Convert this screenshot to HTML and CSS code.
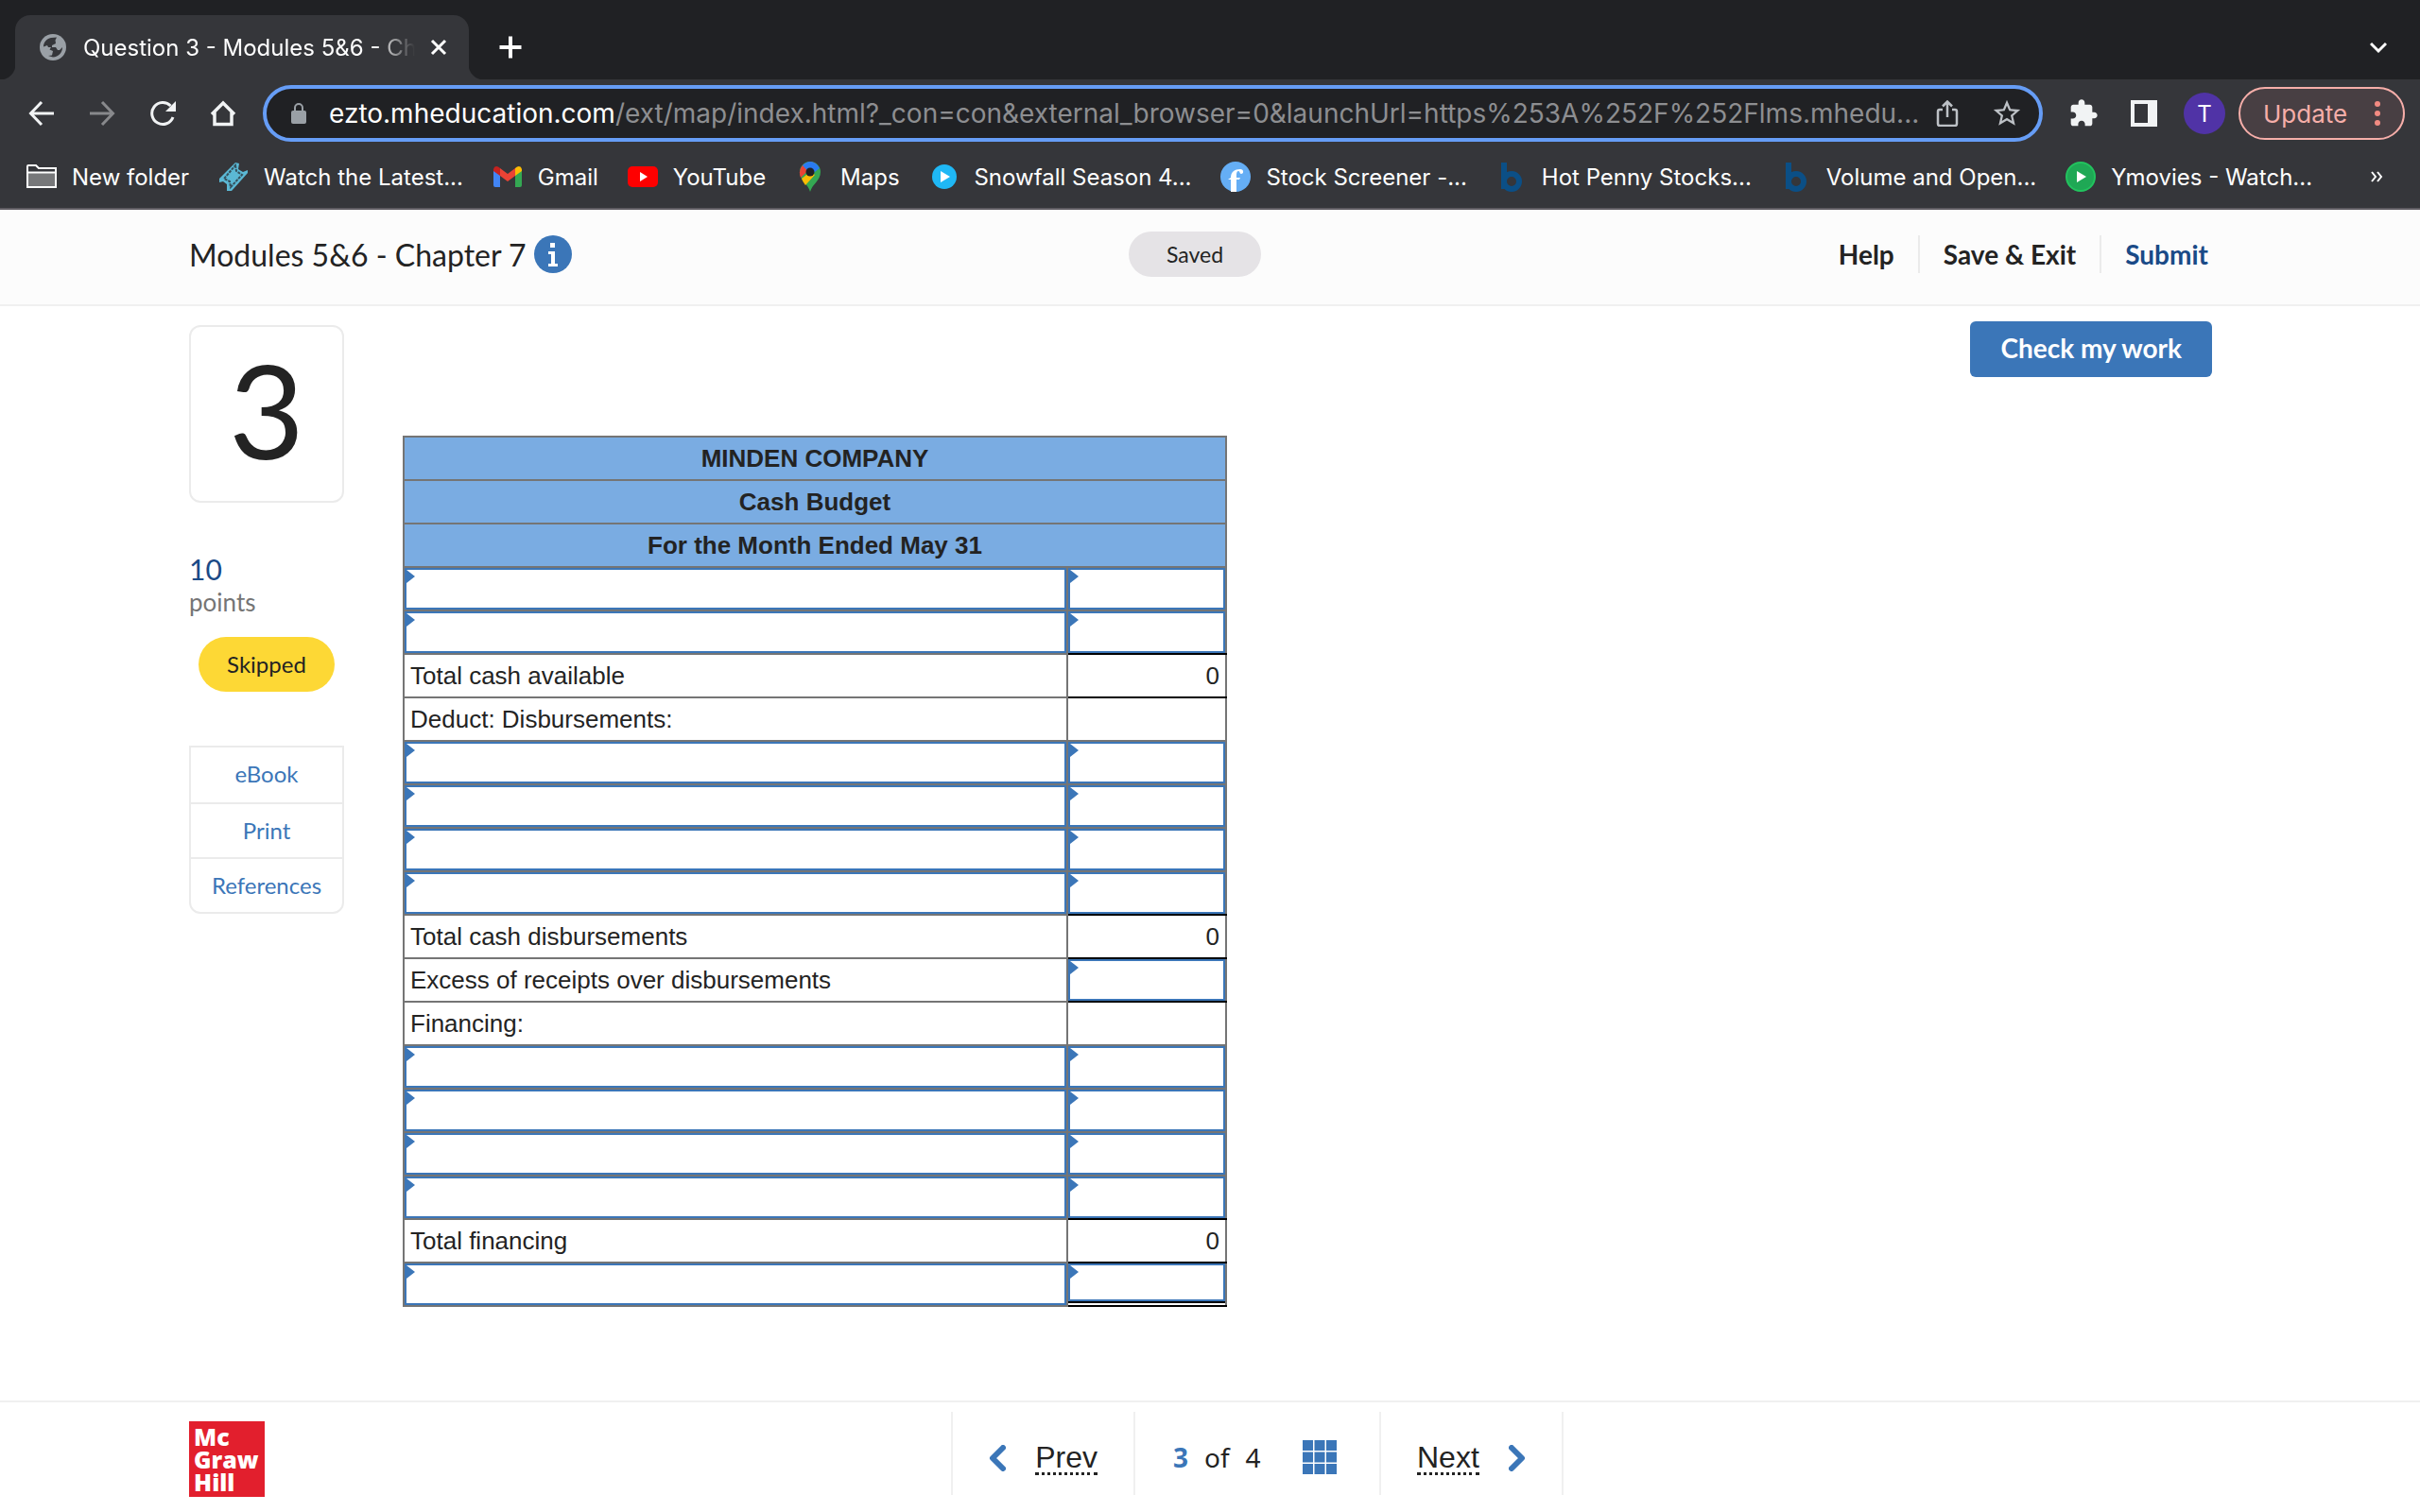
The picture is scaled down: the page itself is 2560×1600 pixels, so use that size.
FILE: index.html
```html
<!DOCTYPE html>
<html lang="en">
<head>
  <meta charset="UTF-8" />
  <meta name="viewport" content="width=device-width, initial-scale=1" />
  <title>Question 3 - Modules 5&amp;6 - Chapter 7</title>
  <link rel="stylesheet" href="styles.css">
</head>
<body>

  <div class="browser">
    <div class="tab-strip">
      <div class="tab">
        <svg class="icon-28" viewBox="0 0 28 28"><circle cx="14" cy="14" r="14" fill="#9aa0a6"/><path d="M12 4 L18 3.5 L16.5 6.5 L17 10 L13 12 L13 14 L9 14 L8 12 L4 13.5 C4 9 7 5 12 4 Z M24 14 C24 20 20 24 14 24.5 L9 23 L13 22.5 L14 18 L10.5 16.5 L12 14 L17 14 L19 17 L21 17 Z" fill="#35363a"/></svg>
        <span class="tab-title">Question 3 - Modules 5&amp;6 - Chapter 7</span>
        <button class="icon-btn" aria-label="Close tab"><svg class="icon-18" viewBox="0 0 18 18"><path d="M2 2 L16 16 M16 2 L2 16" stroke="#fff" stroke-width="3" fill="none"/></svg></button>
      </div>
      <button class="icon-btn new-tab" aria-label="New tab"><svg class="icon-24" viewBox="0 0 24 24"><path d="M12 0.5 V23.5 M0.5 12 H23.5" stroke="#fff" stroke-width="4" fill="none"/></svg></button>
      <button class="icon-btn tab-search" aria-label="Search tabs"><svg class="icon-18" viewBox="0 0 18 18"><path d="M1 5 L9 13 L17 5" stroke="#fff" stroke-width="3" fill="none"/></svg></button>
    </div>

    <div class="toolbar">
      <div class="nav-buttons">
        <button class="icon-btn" aria-label="Back"><svg class="icon-28" viewBox="0 0 28 28"><path d="M27 14 H3 M14 2 L2.5 14 L14 26" stroke="#f1f3f4" stroke-width="3" fill="none"/></svg></button>
        <button class="icon-btn" aria-label="Forward"><svg class="icon-28" viewBox="0 0 28 28"><path d="M1 14 H25 M14 2 L25.5 14 L14 26" stroke="#88898c" stroke-width="3" fill="none"/></svg></button>
        <button class="icon-btn" aria-label="Reload"><svg class="icon-28" viewBox="0 0 28 28"><path d="M25 18 A11.5 11.5 0 1 1 22.5 6" stroke="#f1f3f4" stroke-width="3" fill="none"/><path d="M28 1 V12 H17 Z" fill="#f1f3f4"/></svg></button>
        <button class="icon-btn" aria-label="Home"><svg class="icon-28" viewBox="0 0 28 28"><path d="M2 15 L14 3 L26 15 M5 13 V25.5 H23 V13" stroke="#f1f3f4" stroke-width="3.5" fill="none"/></svg></button>
      </div>
      <div class="omnibox">
        <svg class="lock" viewBox="0 0 16 22"><rect y="8" width="16" height="14" rx="2" fill="#9aa0a6"/><path d="M4 9 V5 A4 4 0 0 1 12 5 V9" stroke="#9aa0a6" stroke-width="2" fill="none"/></svg>
        <div class="url" role="textbox" contenteditable="true" spellcheck="false" aria-label="Address bar"><span class="host">ezto.mheducation.com</span>/ext/map/index.html?_con=con&amp;external_browser=0&amp;launchUrl=https%253A%252F%252Flms.mhedu...</div>
        <button class="icon-btn" aria-label="Share"><svg class="icon-28" viewBox="0 0 28 28"><path d="M9 10 H6 Q4 10 4 12 V25 Q4 27 6 27 H22 Q24 27 24 25 V12 Q24 10 22 10 H19 M14 18 V2 M9 6.5 L14 1.5 L19 6.5" stroke="#bdc1c6" stroke-width="2.5" fill="none"/></svg></button>
        <button class="icon-btn star" aria-label="Bookmark"><svg class="icon-34" viewBox="0 0 24 24"><path fill="#bdc1c6" d="M22 9.24l-7.19-.62L12 2 9.19 8.63 2 9.24l5.46 4.73L5.82 21 12 17.27 18.18 21l-1.63-7.03L22 9.24zM12 15.4l-3.76 2.27 1-4.28-3.32-2.88 4.38-.38L12 6.1l1.71 4.04 4.38.38-3.32 2.88 1 4.28L12 15.4z"/></svg></button>
      </div>
      <div class="tools">
        <button class="icon-btn" aria-label="Extensions"><svg class="icon-32" viewBox="0 0 24 24"><path fill="#f1f3f4" d="M20.5 11H19V7c0-1.1-.9-2-2-2h-4V3.5C13 2.12 11.88 1 10.5 1S8 2.12 8 3.5V5H4c-1.1 0-1.99.9-1.99 2v3.8H3.5c1.49 0 2.7 1.21 2.7 2.7s-1.21 2.7-2.7 2.7H2V20c0 1.1.9 2 2 2h3.8v-1.5c0-1.49 1.21-2.7 2.7-2.7 1.49 0 2.7 1.21 2.7 2.7V22H17c1.1 0 2-.9 2-2v-4h1.5c1.38 0 2.5-1.12 2.5-2.5S21.88 11 20.5 11z"/></svg></button>
        <button class="icon-btn" aria-label="Side panel"><svg class="icon-28" viewBox="0 0 28 28"><path fill="#f1f3f4" fill-rule="evenodd" d="M0 0 H28 V28 H0 Z M4 4 V24 H18 V4 Z"/></svg></button>
        <button class="avatar">T</button>
        <button class="update">Update
          <svg class="dots" viewBox="0 0 6 28"><circle cx="3" cy="4" r="3"/><circle cx="3" cy="14" r="3"/><circle cx="3" cy="24" r="3"/></svg>
        </button>
      </div>
    </div>

    <nav class="bookmarks">
      <a href="#"><svg class="icon-32" viewBox="0 0 32 32"><path d="M1 27 V5 Q1 4 2 4 H10 L13 7 H31 V27 Z" fill="#35363a" stroke="#fff" stroke-width="2"/><path d="M2 12 H30 V26 H2 Z" fill="#77787a"/><path d="M1 11.5 H31" stroke="#fff" stroke-width="2"/></svg>New folder</a>
      <a href="#"><svg class="icon-32" viewBox="0 0 32 32"><path d="M18 1 L22 2 L21 8 L26 11 L31 9 V12 L14 31 H9 V24 L5 21 L1 22 V18 Z" fill="#5bb8d4"/><path d="M18 4 L19 10 L25 14 L13 27 L12 21 L6 18 Z" fill="none" stroke="#35505c" stroke-width="2" stroke-dasharray="3 1"/></svg>Watch the Latest...</a>
      <a href="#"><svg class="icon-32" viewBox="0 0 32 32"><path d="M1 8 L8 13 V27 H3 Q1 27 1 25 Z" fill="#4285f4"/><path d="M31 8 L24 13 V27 H29 Q31 27 31 25 Z" fill="#34a853"/><path d="M8 7 L16 13 L24 7 V15 L16 21 L8 15 Z" fill="#ea4335"/><path d="M1 8 Q2 4 6 5.5 L8 7 V15 L1 10 Z" fill="#c5221f"/><path d="M31 8 Q30 4 26 5.5 L24 7 V15 L31 10 Z" fill="#fbbc04"/></svg>Gmail</a>
      <a href="#"><svg class="icon-32" viewBox="0 0 32 32"><rect y="5" width="32" height="22" rx="5" fill="#f00"/><path d="M13 11 L21 16 L13 21 Z" fill="#fff"/></svg>YouTube</a>
      <a href="#"><svg class="icon-32" viewBox="0 0 32 32"><path d="M16 32 C14 24 5 20 5 11 A11 11 0 0 1 27 11 C27 20 18 24 16 32 Z" fill="#34a853"/><path d="M6 17 L22 2 Q16 -2 8 4 Q3 9 6 17 Z" fill="#ea4335"/><path d="M7 18 L16 11 L21 14 L11 25 Q8 21 7 18 Z" fill="#fbbc04"/><path d="M8 4 Q16 -4 24 4 L26 7 L17 14 Z" fill="#2a7bf0"/><circle cx="16" cy="11" r="4.5" fill="#202124"/></svg>Maps</a>
      <a href="#"><svg class="icon-32" viewBox="0 0 32 32"><circle cx="17" cy="16" r="13" fill="#1fb8f5"/><path d="M13 10 L23 16 L13 22 Z" fill="#fff"/></svg>Snowfall Season 4...</a>
      <a href="#"><svg class="icon-32" viewBox="0 0 32 32"><circle cx="16" cy="16" r="16" fill="#65aef5"/><path d="M11 32 V19 H8 L11 17 C11 11 15 8 21 8 C25 8 25 13 22 13 C20 13 21 10 19 10 C17 10 17 13 17 17 H21 L20 19 H17 V32 Z" fill="#fff"/></svg>Stock Screener -...</a>
      <a href="#"><svg class="icon-32" viewBox="0 0 32 32"><path d="M8 1 V29 M8 21 A8 8 0 1 1 24 21 A8 8 0 1 1 8 21" stroke="#0b4f86" stroke-width="6" fill="none"/></svg>Hot Penny Stocks...</a>
      <a href="#"><svg class="icon-32" viewBox="0 0 32 32"><path d="M8 1 V29 M8 21 A8 8 0 1 1 24 21 A8 8 0 1 1 8 21" stroke="#0b4f86" stroke-width="6" fill="none"/></svg>Volume and Open...</a>
      <a href="#"><svg class="icon-32" viewBox="0 0 32 32"><circle cx="16" cy="16" r="15" fill="#1fa855" stroke="#22c35e" stroke-width="2"/><path d="M12 10 L22 16 L12 22 Z" fill="#fff"/></svg>Ymovies - Watch...</a>
      <button class="icon-btn more" aria-label="More bookmarks"><svg class="icon-14" viewBox="0 0 14 14"><path d="M2 2 L6 7 L2 12 M8 2 L12 7 L8 12" stroke="#fff" stroke-width="2" fill="none"/></svg></button>
    </nav>
  </div>

  <header class="header">
    <div class="assignment">
      <h1>Modules 5&amp;6 - Chapter 7</h1>
      <button class="icon-btn" aria-label="Information"><svg class="icon-40" viewBox="0 0 40 40"><circle cx="20" cy="20" r="20" fill="#3b76b8"/><path d="M17 8 H22 V13 H17 Z M15 17 H22 V30 H25 V33 H15 V30 H18 V20 H15 Z" fill="#fff"/></svg></button>
    </div>
    <span class="saved">Saved</span>
    <nav class="actions">
      <a href="#">Help</a>
      <a href="#">Save &amp; Exit</a>
      <a href="#" class="submit">Submit</a>
    </nav>
  </header>

  <main class="main">
    <aside class="sidebar">
      <div class="question-number">3</div>
      <div class="score">10</div>
      <div class="score-label">points</div>
      <div class="skipped">Skipped</div>
      <nav class="resources">
        <a href="#">eBook</a>
        <a href="#">Print</a>
        <a href="#">References</a>
      </nav>
    </aside>

    <section class="question">
      <table class="budget">
        <colgroup><col><col class="amount-col"></colgroup>
        <thead>
          <tr><th colspan="2">MINDEN COMPANY</th></tr>
          <tr><th colspan="2">Cash Budget</th></tr>
          <tr><th colspan="2">For the Month Ended May 31</th></tr>
        </thead>
        <tbody>
          <tr><td class="entry"><input type="text" aria-label="Receipt item 1"></td><td class="entry"><input type="text" aria-label="Receipt amount 1"></td></tr>
          <tr><td class="entry"><input type="text" aria-label="Receipt item 2"></td><td class="entry ruled"><input type="text" aria-label="Receipt amount 2"></td></tr>
          <tr><td>Total cash available</td><td class="amount ruled">0</td></tr>
          <tr><td>Deduct: Disbursements:</td><td></td></tr>
          <tr><td class="entry"><input type="text" aria-label="Disbursement item 1"></td><td class="entry"><input type="text" aria-label="Disbursement amount 1"></td></tr>
          <tr><td class="entry"><input type="text" aria-label="Disbursement item 2"></td><td class="entry"><input type="text" aria-label="Disbursement amount 2"></td></tr>
          <tr><td class="entry"><input type="text" aria-label="Disbursement item 3"></td><td class="entry"><input type="text" aria-label="Disbursement amount 3"></td></tr>
          <tr><td class="entry"><input type="text" aria-label="Disbursement item 4"></td><td class="entry ruled"><input type="text" aria-label="Disbursement amount 4"></td></tr>
          <tr><td>Total cash disbursements</td><td class="amount ruled">0</td></tr>
          <tr><td><label for="excess">Excess of receipts over disbursements</label></td><td class="entry ruled"><input type="text" id="excess"></td></tr>
          <tr><td>Financing:</td><td></td></tr>
          <tr><td class="entry"><input type="text" aria-label="Financing item 1"></td><td class="entry"><input type="text" aria-label="Financing amount 1"></td></tr>
          <tr><td class="entry"><input type="text" aria-label="Financing item 2"></td><td class="entry"><input type="text" aria-label="Financing amount 2"></td></tr>
          <tr><td class="entry"><input type="text" aria-label="Financing item 3"></td><td class="entry"><input type="text" aria-label="Financing amount 3"></td></tr>
          <tr><td class="entry"><input type="text" aria-label="Financing item 4"></td><td class="entry ruled"><input type="text" aria-label="Financing amount 4"></td></tr>
          <tr><td>Total financing</td><td class="amount ruled">0</td></tr>
          <tr><td class="entry"><input type="text" aria-label="Ending balance item"></td><td class="entry ruled"><div class="double-rule"><input type="text" aria-label="Ending balance amount"></div></td></tr>
        </tbody>
      </table>
    </section>

    <button class="check">Check my work</button>
  </main>

  <footer class="footer">
    <div class="logo">Mc<br>Graw<br>Hill</div>
    <nav class="pager">
      <div class="pager-cell pager-link">
        <svg class="chevron" viewBox="0 0 18 28"><path d="M15 3 L4 14 L15 25" stroke="#3b76b8" stroke-width="6" stroke-linecap="round" stroke-linejoin="round" fill="none"/></svg>
        <a href="#">Prev</a>
      </div>
      <div class="pager-cell pager-status">
        <span class="count"><b>3</b><span>of</span><span>4</span></span>
        <button class="icon-btn" aria-label="All questions"><svg class="icon-36" viewBox="0 0 36 36"><path fill="#3b76b8" d="M0 0h11v11H0zM12.5 0h11v11h-11zM25 0h11v11H25zM0 12.5h11v11H0zM12.5 12.5h11v11h-11zM25 12.5h11v11H25zM0 25h11v11H0zM12.5 25h11v11h-11zM25 25h11v11H25z"/></svg></button>
      </div>
      <div class="pager-cell pager-link">
        <a href="#">Next</a>
        <svg class="chevron" viewBox="0 0 18 28"><path d="M3 3 L14 14 L3 25" stroke="#3b76b8" stroke-width="6" stroke-linecap="round" stroke-linejoin="round" fill="none"/></svg>
      </div>
    </nav>
  </footer>

</body>
</html>
```

FILE: styles.css
```css
* {
  box-sizing: border-box;
}

body {
  margin: 0;
  min-height: 100vh;
  display: flex;
  flex-direction: column;
  background: #fff;
  color: #232323;
  font-family: Lato, sans-serif;
  font-size: 24px;
}

a {
  color: inherit;
  text-decoration: none;
}

button {
  font-family: inherit;
  cursor: pointer;
}

svg {
  display: block;
  flex: none;
}

.icon-btn {
  display: flex;
  flex: none;
  padding: 0;
  border: 0;
  background: none;
}

.icon-14 { width: 14px; height: 14px; }
.icon-18 { width: 18px; height: 18px; }
.icon-24 { width: 24px; height: 24px; }
.icon-28 { width: 28px; height: 28px; }
.icon-32 { width: 32px; height: 32px; }
.icon-34 { width: 34px; height: 34px; }
.icon-36 { width: 36px; height: 36px; }
.icon-40 { width: 40px; height: 40px; }

/* browser bars */
.browser {
  background: #35363a;
  border-bottom: 2px solid #5f5c62;
  color: #fff;
  font-family: Inter, sans-serif;
}

.tab-strip {
  display: flex;
  align-items: center;
  height: 84px;
  padding: 16px 35px 0 16px;
  background: #202124;
}

.tab {
  position: relative;
  display: flex;
  align-items: center;
  width: 480px;
  height: 68px;
  padding: 0 23px 0 26px;
  border-radius: 16px 16px 0 0;
  background: #35363a;
}

/* curved feet of the active tab */
.tab::before,
.tab::after {
  content: "";
  position: absolute;
  bottom: 0;
  width: 16px;
  height: 16px;
}

.tab::before {
  right: 100%;
  background: radial-gradient(circle at 0 0, #202124 16px, #35363a 17px);
}

.tab::after {
  left: 100%;
  background: radial-gradient(circle at 100% 0, #202124 16px, #35363a 17px);
}

.tab-title {
  flex: 1;
  margin: 0 16px 0 18px;
  overflow: hidden;
  white-space: nowrap;
  -webkit-mask-image: linear-gradient(to right, #000 88%, transparent);
  mask-image: linear-gradient(to right, #000 88%, transparent);
}

.new-tab {
  margin-left: 32px;
}

.tab-search {
  margin-left: auto;
}

.toolbar {
  display: flex;
  align-items: center;
  padding: 6px 16px 10px 30px;
}

.nav-buttons {
  display: flex;
  gap: 36px;
  margin-right: 28px;
}

.omnibox {
  display: flex;
  flex: 1;
  align-items: center;
  min-width: 0;
  height: 60px;
  padding: 0 17px 0 26px;
  border: 4px solid #669df6;
  border-radius: 30px;
  background: #202124;
}

.lock {
  width: 16px;
  height: 22px;
}

.url {
  flex: 1;
  margin: 0 10px 0 24px;
  overflow: hidden;
  white-space: nowrap;
  color: #8d8e91;
  font-size: 28px;
  outline: none;
}

.host {
  color: #fff;
}

.star {
  margin-left: 32px;
}

.tools {
  display: flex;
  align-items: center;
  gap: 34px;
  margin-left: 27px;
}

.avatar {
  width: 44px;
  height: 44px;
  margin: 0 -8px 0 -6px;
  padding: 0;
  border: 0;
  border-radius: 50%;
  background: #5033a6;
  color: #fff;
  font-size: 24px;
}

.update {
  display: flex;
  align-items: center;
  justify-content: space-between;
  width: 176px;
  height: 56px;
  margin-left: -12px;
  padding: 0 24px;
  border: 2px solid #f6aea9;
  border-radius: 28px;
  background: #483f43;
  color: #f6aea9;
  font-size: 26px;
}

.dots {
  width: 6px;
  height: 28px;
  fill: #f28b82;
}

.bookmarks {
  display: flex;
  align-items: center;
  justify-content: space-between;
  height: 60px;
  padding: 0 39px 6px 28px;
}

.bookmarks a {
  display: flex;
  align-items: center;
  gap: 16px;
  white-space: nowrap;
}

.more {
  margin-left: 30px;
}

/* assignment header */
.header {
  display: grid;
  grid-template-columns: 1fr auto 1fr;
  align-items: center;
  height: 102px;
  padding: 0 224px 6px 200px;
  border-bottom: 2px solid #f0f0f0;
  background: #fcfcfc;
}

.assignment {
  display: flex;
  align-items: center;
  gap: 8px;
}

.assignment h1 {
  margin: 0;
  font-size: 32px;
  font-weight: 400;
}

.saved {
  margin-right: 8px;
  padding: 0 40px;
  border-radius: 24px;
  background: #e5e3e6;
  font-size: 23px;
  line-height: 48px;
}

.actions {
  display: flex;
  justify-content: flex-end;
  font-size: 28px;
  font-weight: 700;
  line-height: 40px;
}

.actions a + a {
  margin-left: 25px;
  padding-left: 25px;
  border-left: 2px solid #ebebeb;
}

.actions .submit {
  color: #1a4a87;
}

/* question */
.main {
  display: flex;
  flex: 1;
  align-items: flex-start;
  padding: 16px 220px 60px 200px;
}

.sidebar {
  width: 164px;
  padding-top: 4px;
}

.question-number {
  display: flex;
  align-items: center;
  justify-content: center;
  height: 188px;
  margin-bottom: 52px;
  padding-bottom: 10px;
  border: 2px solid #ebebeb;
  border-radius: 12px;
  font-size: 138px;
  line-height: 1;
}

.score {
  color: #1a4a87;
  font-size: 30px;
  line-height: 36px;
}

.score-label {
  color: #757575;
  font-size: 26px;
  line-height: 34px;
}

.skipped {
  margin: 20px 10px 57px;
  border-radius: 29px;
  background: #fdd835;
  font-size: 24px;
  line-height: 58px;
  text-align: center;
}

.resources {
  border: 2px solid #ebebeb;
  border-radius: 0 0 12px 12px;
  color: #3b76b8;
  font-size: 24px;
  line-height: 56px;
  text-align: center;
}

.resources a {
  display: block;
}

.resources a:first-child {
  padding-bottom: 2px;
}

.resources a + a {
  border-top: 2px solid #ebebeb;
}

.question {
  flex: 1;
  padding: 121px 0 0 62px;
}

.budget {
  width: 872px;
  border-collapse: collapse;
  table-layout: fixed;
  font-family: "Liberation Sans", Arial, sans-serif;
  font-size: 26px;
}

.amount-col {
  width: 168px;
}

.budget th,
.budget td {
  height: 46px;
  padding: 0 6px;
  border: 2px solid #757575;
  line-height: 30px;
  text-align: left;
}

.budget th {
  background: #7aace2;
  text-align: center;
}

.budget .amount {
  text-align: right;
}

.budget .ruled {
  border-bottom-color: #000;
}

.budget .entry {
  position: relative;
  padding: 0;
}

.entry input {
  display: block;
  width: 100%;
  height: 44px;
  padding: 0 8px;
  border: 2px solid #3b76b8;
  background: none;
  font: inherit;
  outline: none;
}

/* answer marker in the corner of each cell */
.entry::before {
  content: "";
  position: absolute;
  top: 2px;
  left: 2px;
  border: 7px solid transparent;
  border-left: 9px solid #3b76b8;
  border-right: 0;
}

.double-rule {
  padding-bottom: 2px;
}

.double-rule input {
  height: 40px;
  margin-bottom: 2px;
  box-shadow: 0 2px #000;
}

.check {
  padding: 0 32px 2px;
  border: 0;
  border-radius: 6px;
  background: #3b76b8;
  color: #fff;
  font-size: 28px;
  font-weight: 700;
  line-height: 57px;
}

/* bottom navigation */
.footer {
  display: grid;
  grid-template-columns: 1fr auto 1fr;
  align-items: start;
  height: 118px;
  padding: 10px 200px 0;
  border-top: 2px solid #f0f0f0;
}

.logo {
  width: 80px;
  height: 80px;
  margin-top: 10px;
  padding: 4px 5px;
  background: #e21f2d;
  color: #fff;
  font-family: "Open Sans", sans-serif;
  font-size: 25px;
  font-weight: 800;
  line-height: 24px;
}

.pager {
  display: flex;
  border-left: 2px solid #f0f0f0;
  margin-left: 100px;
}

.pager-cell {
  display: flex;
  align-items: center;
  justify-content: space-between;
  height: 88px;
  padding: 10px 38px 0;
  border-right: 2px solid #f0f0f0;
}

.pager-link {
  width: 193px;
}

.pager-status {
  width: 260px;
  padding: 8px 45px 0 40px;
}

.pager a {
  border-bottom: 3px dotted #232323;
  font-family: "Liberation Sans", Arial, sans-serif;
  font-size: 32px;
  line-height: 32px;
}

.chevron {
  width: 18px;
  height: 28px;
}

.count {
  display: flex;
  gap: 17px;
  font-family: "Noto Sans", sans-serif;
  font-size: 28px;
}

.count b {
  color: #3b76b8;
}
```
